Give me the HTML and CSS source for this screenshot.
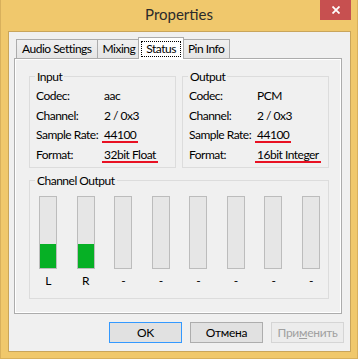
FILE: index.html
```html
<!DOCTYPE html>
<html lang="en">
<head>
  <meta charset="UTF-8">
  <link rel="stylesheet" href="styles.css">
  <title>Properties</title>
</head>
<body>
  <div class="window">
    <div class="titlebar">
      <span class="title">Properties</span>
      <button class="close" aria-label="Close">
        <svg width="8" height="8" viewBox="0 0 8 8"><path d="M0.5 0.5 L7.5 7.5 M7.5 0.5 L0.5 7.5" stroke="#fff" stroke-width="1.8" fill="none"/></svg>
      </button>
    </div>

    <div class="client">
      <div class="tabs">
        <div class="tab">Audio Settings</div>
        <div class="tab">Mixing</div>
        <div class="tab active"><span class="focus">Status</span></div>
        <div class="tab">Pin Info</div>
      </div>

      <div class="panel">
        <div class="groups">
          <fieldset class="group">
            <legend>Input</legend>
            <div class="info">
              <div>Codec:</div><div>aac</div>
              <div>Channel:</div><div>2 / 0x3</div>
              <div>Sample Rate:</div><div><span class="mark">44100</span></div>
              <div>Format:</div><div><span class="mark">32bit Float</span></div>
            </div>
          </fieldset>
          <fieldset class="group">
            <legend>Output</legend>
            <div class="info">
              <div>Codec:</div><div>PCM</div>
              <div>Channel:</div><div>2 / 0x3</div>
              <div>Sample Rate:</div><div><span class="mark">44100</span></div>
              <div>Format:</div><div><span class="mark">16bit Integer</span></div>
            </div>
          </fieldset>
        </div>

        <fieldset class="group channels">
          <legend>Channel Output</legend>
          <div class="meters">
            <div class="meter-col"><div class="meter"><div class="level" style="height: 24px"></div></div><span>L</span></div>
            <div class="meter-col"><div class="meter"><div class="level" style="height: 24px"></div></div><span>R</span></div>
            <div class="meter-col"><div class="meter"></div><span>-</span></div>
            <div class="meter-col"><div class="meter"></div><span>-</span></div>
            <div class="meter-col"><div class="meter"></div><span>-</span></div>
            <div class="meter-col"><div class="meter"></div><span>-</span></div>
            <div class="meter-col"><div class="meter"></div><span>-</span></div>
            <div class="meter-col"><div class="meter"></div><span>-</span></div>
          </div>
        </fieldset>
      </div>

      <div class="buttons">
        <button class="btn default">OK</button>
        <button class="btn">Отмена</button>
        <button class="btn" disabled>При<u>м</u>енить</button>
      </div>
    </div>
  </div>
</body>
</html>
```

FILE: styles.css
```css
body {
  margin: 0;
  font-family: Lato, "Noto Sans", sans-serif;
  font-size: 12px;
  letter-spacing: -0.5px;
  color: #000;
}

.window {
  width: 358px;
  height: 359px;
  box-sizing: border-box;
  background-color: #f0c86c;
  border: 1px solid #d8b05c;
  border-top: none;
}

/* Title bar */
.titlebar {
  height: 31px;
  display: grid;
  grid-template-columns: 37px 1fr 37px;
}

.title {
  grid-column: 2;
  text-align: center;
  font-size: 15px;
  letter-spacing: 0;
  line-height: 20px;
  padding-top: 4px;
  color: #2b2b2b;
}

.close {
  grid-column: 3;
  width: 31px;
  height: 20px;
  padding: 0;
  border: none;
  background-color: #c75050;
  display: flex;
  align-items: center;
  justify-content: center;
}

/* Client area */
.client {
  margin-left: 7px;
  width: 343px;
  height: 321px;
  box-sizing: border-box;
  border: 1px solid #c9a55b;
  background-color: #f0f0f0;
}

.tabs {
  display: flex;
  align-items: flex-end;
  margin: 5px 0 0 7px;
  height: 21px;
}

.tab {
  height: 19px;
  box-sizing: border-box;
  padding: 0 5px;
  line-height: 17px;
  border: 1px solid #acacac;
  border-bottom: none;
  margin-left: -1px;
  background: linear-gradient(#f0f0f0, #e5e5e5);
  white-space: nowrap;
}

.tab:first-child {
  margin-left: 0;
}

.tab.active {
  height: 22px;
  margin: 0 -2px -1px -3px;
  padding: 3px 2px 0;
  background: #fff;
  position: relative;
  z-index: 1;
}

.tab.active + .tab {
  margin-left: 0;
}

.focus {
  display: block;
  border: 1px dotted #000;
  padding: 0 4px;
  line-height: 14px;
}

.panel {
  margin-left: 5px;
  width: 328px;
  height: 256px;
  box-sizing: border-box;
  border: 1px solid #acacac;
  box-shadow: inset 1px 1px 0 #fff, inset -1px -1px 0 #fff;
  padding: 10px 12px 0 14px;
}

.groups {
  display: grid;
  grid-template-columns: 1fr 1fr;
  gap: 6px;
}

.group {
  margin: 0;
  padding: 0;
  border: 1px solid #dcdcdc;
  min-width: 0;
}

.group legend {
  margin-left: 5px;
  padding: 0 2px;
  line-height: 15px;
}

.info {
  display: grid;
  grid-template-columns: 68px 1fr;
  line-height: 19.6px;
  padding: 2px 0 3px 6px;
  white-space: nowrap;
}

.mark {
  display: inline-block;
  line-height: 12px;
  padding: 0 2px;
  margin-left: -2px;
  border-bottom: 2px solid #e81123;
}

/* Channel meters */
.channels {
  margin-top: 5px;
}

.meters {
  display: flex;
  justify-content: space-between;
  padding: 8px 8px 10px 9px;
}

.meter-col {
  display: flex;
  flex-direction: column;
  align-items: center;
  width: 18px;
}

.meter {
  width: 18px;
  height: 73px;
  box-sizing: border-box;
  border: 1px solid #bcbcbc;
  background-color: #e6e6e6;
  display: flex;
  align-items: flex-end;
}

.level {
  width: 100%;
  background-color: #06b025;
}

.meter-col span {
  margin-top: 4px;
  line-height: 15px;
}

/* Dialog buttons */
.buttons {
  display: flex;
  justify-content: flex-end;
  gap: 8px;
  margin-top: 8px;
  padding-right: 6px;
}

.btn {
  width: 73px;
  height: 21px;
  padding: 0;
  font-family: Lato, "Noto Sans", sans-serif;
  font-size: 12px;
  letter-spacing: -0.3px;
  color: #000;
  background-color: #e1e1e1;
  border: 1px solid #adadad;
}

.btn.default {
  border-color: #3399ff;
}

.btn:disabled {
  color: #a0a0a0;
  background-color: #ececec;
  border-color: #d5d5d5;
}
```
